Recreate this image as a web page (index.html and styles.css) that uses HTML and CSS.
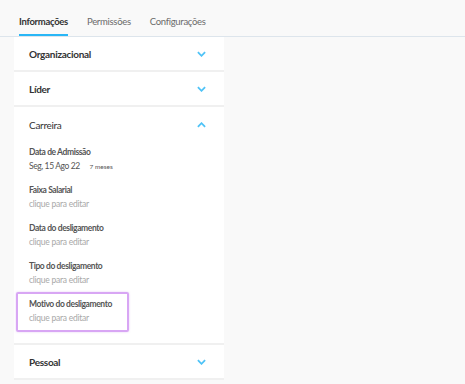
FILE: index.html
```html
<!DOCTYPE html>
<html lang="pt-BR">
<head>
  <meta charset="UTF-8">
  <title>Colaborador</title>
  <link rel="stylesheet" href="styles.css">
</head>
<body>
  <nav class="tabs">
    <a class="tab active">Informações</a>
    <a class="tab">Permissões</a>
    <a class="tab">Configurações</a>
  </nav>

  <div class="card">
    <section class="group">
      <div class="group-head">
        <span>Organizacional</span>
        <svg class="chev" viewBox="0 0 10 6"><path d="M1 1l4 4 4-4"/></svg>
      </div>
    </section>

    <section class="group">
      <div class="group-head">
        <span>Líder</span>
        <svg class="chev" viewBox="0 0 10 6"><path d="M1 1l4 4 4-4"/></svg>
      </div>
    </section>

    <section class="group open">
      <div class="group-head">
        <span class="light">Carreira</span>
        <svg class="chev" viewBox="0 0 10 6"><path d="M1 5l4-4 4 4"/></svg>
      </div>
      <div class="fields">
        <div class="field">
          <div class="label">Data de Admissão</div>
          <div class="value date">Seg, 15 Ago 22 <small>7 meses</small></div>
        </div>
        <div class="field">
          <div class="label">Faixa Salarial</div>
          <div class="value">clique para editar</div>
        </div>
        <div class="field">
          <div class="label">Data do desligamento</div>
          <div class="value">clique para editar</div>
        </div>
        <div class="field">
          <div class="label">Tipo do desligamento</div>
          <div class="value">clique para editar</div>
        </div>
        <div class="field focus">
          <div class="label">Motivo do desligamento</div>
          <div class="value">clique para editar</div>
        </div>
      </div>
    </section>

    <section class="group">
      <div class="group-head">
        <span>Pessoal</span>
        <svg class="chev" viewBox="0 0 10 6"><path d="M1 1l4 4 4-4"/></svg>
      </div>
    </section>
  </div>
</body>
</html>
```

FILE: styles.css
```css
body {
  margin: 0;
  background: #f9f9f9;
  font-family: Lato, 'Open Sans', sans-serif;
  color: #444;
}

.tabs {
  display: flex;
  gap: 19px;
  padding-left: 19px;
  height: 36px;
  border-bottom: 1px solid #dde5ec;
}

.tab {
  display: flex;
  align-items: center;
  font-size: 9.5px;
  letter-spacing: -0.3px;
  color: #6b6b6b;
  border-bottom: 2px solid transparent;
  padding-top: 8px;
  box-sizing: border-box;
  height: 36px;
}

.tab.active {
  color: #333;
  font-weight: 700;
  border-bottom-color: #29b6f6;
}

.card {
  background: #fff;
  width: 210px;
  margin-left: 14px;
}

.group {
  border-bottom: 2px solid #f0f0f0;
}

.group-head {
  display: flex;
  justify-content: space-between;
  align-items: center;
  height: 33px;
  padding: 0 18px 0 15px;
  font-size: 10px;
  letter-spacing: -0.3px;
  font-weight: 700;
  color: #333;
}

.open .group-head {
  padding-top: 2px;
  height: 31px;
}

.group-head .light {
  font-weight: 400;
}

.chev {
  width: 9px;
  height: 6px;
  fill: none;
  stroke: #4fc3f7;
  stroke-width: 2;
}

.fields {
  padding: 0 0 11px 2px;
}

.field {
  width: 113px;
  box-sizing: border-box;
  padding: 4px 11px 5px;
  border: 2px solid transparent;
  border-radius: 2px;
  margin-bottom: -2px;
}

.field:last-child {
  margin-bottom: 0;
}

.field.focus {
  border-color: #d8a6f4;
  box-shadow: 0 0 2px rgba(200, 140, 240, 0.5);
}

.label {
  font-size: 8.5px;
  letter-spacing: -0.4px;
  font-weight: 700;
  color: #555;
  line-height: 13px;
  white-space: nowrap;
}

.value {
  font-size: 8.5px;
  letter-spacing: -0.25px;
  color: #a8a8a8;
  line-height: 13px;
  margin-top: 1px;
  white-space: nowrap;
}

.value.date {
  color: #555;
  letter-spacing: -0.4px;
}

.value small {
  font-size: 6.5px;
  letter-spacing: 0;
  margin-left: 8px;
}
```
